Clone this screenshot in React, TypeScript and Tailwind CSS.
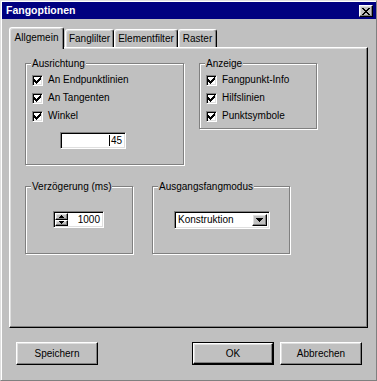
import React from "react";

const raised =
  "border border-t-white border-l-white border-r-black border-b-black shadow-[inset_-1px_-1px_0_#808080,inset_1px_1px_0_#dfdfdf]";
const sunken =
  "border border-t-[#808080] border-l-[#808080] border-r-white border-b-white shadow-[inset_1px_1px_0_#000,inset_-1px_-1px_0_#dfdfdf]";

function CheckMark() {
  return (
    <svg width="7" height="7" viewBox="0 0 7 7" shapeRendering="crispEdges">
      <path
        d="M6 0h1v1h-1z M5 1h2v1h-2z M0 2h1v1h-1z M4 2h3v1h-3z M0 3h2v1h-2z M3 3h3v1h-3z M0 4h5v1h-5z M1 5h3v1h-3z M2 6h1v1h-1z"
        fill="#000"
      />
    </svg>
  );
}

function Check({ label }: { label: string }) {
  return (
    <div className="flex items-center h-[18px]">
      <div className={"w-[11px] h-[11px] bg-white flex items-center justify-center shrink-0 " + sunken}>
        <CheckMark />
      </div>
      <span className="ml-[5px] leading-[12px]">{label}</span>
    </div>
  );
}

function Group({
  title,
  className,
  children,
}: {
  title: string;
  className: string;
  children?: React.ReactNode;
}) {
  return (
    <div
      className={
        "relative border border-[#808080] shadow-[1px_1px_0_#fff,inset_1px_1px_0_#fff] shrink-0 " + className
      }
    >
      <span className="absolute -top-[6px] left-[5px] bg-[#c0c0c0] px-[1px] leading-[12px] whitespace-nowrap">
        {title}
      </span>
      {children}
    </div>
  );
}

function Tab({ label, w, active }: { label: string; w: string; active?: boolean }) {
  if (active) {
    return (
      <div
        className={
          "relative z-10 -mb-[2px] h-[22px] bg-[#c0c0c0] border-t border-l border-r border-t-white border-l-white border-r-black rounded-t-[3px] shadow-[inset_-1px_0_0_#808080,inset_1px_1px_0_#dfdfdf] flex items-start justify-center pt-[4px] leading-[12px] " +
          w
        }
      >
        {label}
      </div>
    );
  }
  return (
    <div
      className={
        "h-[18px] bg-[#c0c0c0] border-t border-l border-r border-t-white border-l-white border-r-black rounded-t-[3px] shadow-[inset_-1px_0_0_#808080,inset_1px_1px_0_#dfdfdf] flex items-start justify-center pt-[3px] leading-[12px] " +
        w
      }
    >
      {label}
    </div>
  );
}

export default function App() {
  return (
    <div className="w-[377px] h-[381px] bg-[#c0c0c0] font-['Liberation_Sans',Arial,sans-serif] text-[10px] text-black border border-t-[#dfdfdf] border-l-[#dfdfdf] border-r-[#808080] border-b-[#808080] overflow-hidden select-none">
      <div className="h-full border-t border-l border-white flex flex-col">
        {/* Title bar */}
        <div className="h-[17px] bg-[#000080] flex items-start justify-between pl-[4px] pr-[3px] shrink-0">
          <span className="text-white font-bold text-[10.5px] leading-[17px]">Fangoptionen</span>
          <div className={"mt-[3px] w-[14px] h-[12px] bg-[#c0c0c0] flex items-center justify-center " + raised}>
            <svg width="8" height="7" viewBox="0 0 8 7" shapeRendering="crispEdges">
              <path
                d="M0 0h2v1h-2z M6 0h2v1h-2z M1 1h2v1h-2z M5 1h2v1h-2z M2 2h4v1h-4z M3 3h2v1h-2z M2 4h4v1h-4z M1 5h2v1h-2z M5 5h2v1h-2z M0 6h2v1h-2z M6 6h2v1h-2z"
                fill="#000"
              />
            </svg>
          </div>
        </div>

        {/* Tabs */}
        <div className="mt-[8px] ml-[7px] flex items-end h-[20px] shrink-0">
          <Tab label="Allgemein" w="w-[55px]" active />
          <div className="ml-[1px]" />
          <Tab label="Fanglilter" w="w-[49px]" />
          <Tab label="Elementfilter" w="w-[64px]" />
          <Tab label="Raster" w="w-[39px]" />
        </div>

        {/* Panel */}
        <div className={"ml-[7px] w-[359px] h-[281px] shrink-0 pl-[15px] pt-[15px] flex flex-col " + raised}>
          <div className="flex items-start">
            <Group title="Ausrichtung" className="w-[159px] h-[102px] pl-[6px] pt-[7px]">
              <Check label="An Endpunktlinien" />
              <Check label="An Tangenten" />
              <Check label="Winkel" />
              <div className={"mt-[7px] ml-[28px] w-[66px] h-[17px] bg-white flex items-center justify-end pr-[3px] " + sunken}>
                <span className="w-px h-[11px] bg-black mr-[1px]" />
                <span className="leading-[12px]">45</span>
              </div>
            </Group>
            <Group title="Anzeige" className="ml-[15px] w-[118px] h-[66px] pl-[6px] pt-[7px]">
              <Check label="Fangpunkt-Info" />
              <Check label="Hilfslinien" />
              <Check label="Punktsymbole" />
            </Group>
          </div>

          <div className="flex items-start mt-[21px]">
            <Group title="Verzögerung (ms)" className="w-[108px] h-[68px] pl-[27px] pt-[24px]">
              <div className={"w-[51px] h-[17px] bg-white flex " + sunken}>
                <div className="w-[15px] h-full p-[1px] flex flex-col">
                  <div className={"h-[6px] bg-[#c0c0c0] flex items-center justify-center box-content " + raised}>
                    <svg width="5" height="3" viewBox="0 0 5 3" shapeRendering="crispEdges">
                      <path d="M2 0h1v1h-1z M1 1h3v1h-3z M0 2h5v1h-5z" fill="#000" />
                    </svg>
                  </div>
                  <div className={"h-[5px] bg-[#c0c0c0] flex items-center justify-center box-content " + raised}>
                    <svg width="5" height="3" viewBox="0 0 5 3" shapeRendering="crispEdges">
                      <path d="M0 0h5v1h-5z M1 1h3v1h-3z M2 2h1v1h-1z" fill="#000" />
                    </svg>
                  </div>
                </div>
                <div className="flex-1 flex items-center justify-end pr-[3px] leading-[12px]">1000</div>
              </div>
            </Group>
            <Group title="Ausgangsfangmodus" className="ml-[19px] w-[138px] h-[68px] pl-[21px] pt-[24px]">
              <div className={"w-[96px] h-[18px] bg-white flex items-stretch p-[2px] " + sunken}>
                <div className="flex-1 flex items-center pl-[1px] leading-[12px]">Konstruktion</div>
                <div className={"w-[15px] bg-[#c0c0c0] flex items-center justify-center " + raised}>
                  <svg width="7" height="4" viewBox="0 0 7 4" shapeRendering="crispEdges">
                    <path d="M0 0h7v1h-7z M1 1h5v1h-5z M2 2h3v1h-3z M3 3h1v1h-1z" fill="#000" />
                  </svg>
                </div>
              </div>
            </Group>
          </div>
        </div>

        {/* Buttons */}
        <div className="mt-[14px] flex items-start shrink-0">
          <div className={"ml-[14px] w-[82px] h-[23px] bg-[#c0c0c0] flex items-center justify-center leading-[12px] " + raised}>
            Speichern
          </div>
          <div className="ml-[94px] w-[82px] h-[23px] border border-black flex">
            <div className={"flex-1 bg-[#c0c0c0] flex items-center justify-center leading-[12px] " + raised}>OK</div>
          </div>
          <div className={"ml-[6px] w-[82px] h-[23px] bg-[#c0c0c0] flex items-center justify-center leading-[12px] " + raised}>
            Abbrechen
          </div>
        </div>
      </div>
    </div>
  );
}
